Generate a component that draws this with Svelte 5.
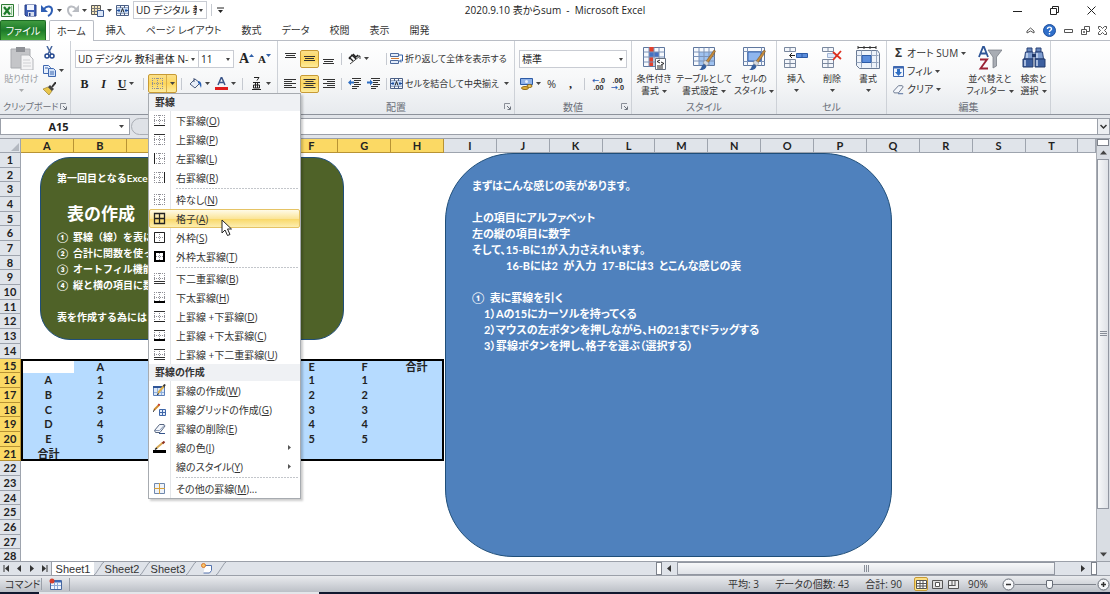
<script>
    const tabs = ["ホーム", "挿入", "ページ レイアウト", "数式", "データ", "校閲", "表示", "開発"];

    const borderItems = [
        { label: "下罫線", key: "O", icon: "b" },
        { label: "上罫線", key: "P", icon: "t" },
        { label: "左罫線", key: "L", icon: "l" },
        { label: "右罫線", key: "R", icon: "r" },
        { sep: true },
        { label: "枠なし", key: "N", icon: "none" },
        { label: "格子", key: "A", icon: "all" },
        { label: "外枠", key: "S", icon: "box" },
        { label: "外枠太罫線", key: "T", icon: "thickbox" },
        { sep: true },
        { label: "下二重罫線", key: "B", icon: "bb" },
        { label: "下太罫線", key: "H", icon: "B" },
        { label: "上罫線 +下罫線", key: "D", icon: "tb" },
        { label: "上罫線 +下太罫線", key: "C", icon: "tB" },
        { label: "上罫線 +下二重罫線", key: "U", icon: "tbb" },
        { heading: "罫線の作成" },
        { label: "罫線の作成", key: "W", icon: "draw" },
        { label: "罫線グリッドの作成", key: "G", icon: "drawgrid" },
        { label: "罫線の削除", key: "E", icon: "erase" },
        { label: "線の色", key: "I", icon: "color", more: true },
        { label: "線のスタイル", key: "Y", more: true },
        { sep: true },
        { label: "その他の罫線", key: "M", icon: "other", tail: "..." },
    ];

    const cols = "ABCDEFGHIJKLMNOPQRST".split("");
    const rows = Array.from({ length: 28 }, (_, i) => i + 1);

    const cells = { B15: "A", F15: "E", G15: "F", H15: "合計" };
    ["A", "B", "C", "D", "E", "合計"].forEach((t, i) => (cells["A" + (16 + i)] = t));
    for (const c of ["B", "F", "G"]) {
        for (let n = 1; n <= 5; n++) cells[c + (15 + n)] = n;
    }

    const inCols = (c) => c < 8;
    const inRows = (r) => r >= 15 && r <= 21;

    let active = $state("格子");
    let name = $state("A15");
    let formula = $state("");
    let zoom = $state(90);
</script>

{#snippet borderIcon(kind)}
    <svg class="i13" viewBox="0 0 13 13">
        {#if kind === "draw"}
            <path d="M.5 2.500h11v9h-11z" fill="#dbe7f8" stroke="#5b7fb8" />
            <path d="M0 3h12" stroke="#2f5597" stroke-width="2" />
            <path d="M1 8.500h10M4.500 4v7M8.500 4v7" stroke="#8fb0de" />
            <path d="M5 9l6-7" stroke="#e0b04a" stroke-width="2" />
            <path d="M10.500 2.500l1.500-2" stroke="#333" stroke-width="2" />
            <path d="M4 10.500l2-.8" stroke="#222" />
        {:else if kind === "drawgrid"}
            <path d="M1 7l5-5" stroke="#d08a2c" stroke-width="2" />
            <path d="M5.500 2.500l1-1.500" stroke="#c0392b" stroke-width="2" />
            <path d="M0 9l1.500-2.500" stroke="#333" />
            <path d="M6.500 6.500h6v6h-6zM9.500 6.500v6M6.500 9.500h6" fill="#e3edfb" stroke="#3f66a8" />
        {:else if kind === "erase"}
            <path d="M1.500 8.500l5-6h4.500l1 1.500-5 6.500h-4.500z" fill="#f4f7fc" stroke="#56657f" />
            <path d="M2 8.500h4.500l5-5.500" fill="none" stroke="#8b9bb8" />
            <path d="M6 11.500h6" stroke="#34548c" />
        {:else if kind === "color"}
            <path d="M3 7.500l7-6" stroke="#d8aa55" stroke-width="2" />
            <path d="M9.500 2.500l2-2" stroke="#8d2f22" stroke-width="2" />
            <path d="M2 8.500l2-1.500" stroke="#222" stroke-width="1.500" />
            <path d="M0 9h13v3h-13z" fill="#000" />
        {:else if kind === "other"}
            <path d="M1.500 1.500h10v10h-10z" fill="#eef3fa" stroke="#6f88ad" />
            <path d="M6.500 1v11M1 6.500h11" stroke="#d8a13a" />
        {:else}
            <path
                d="M1.500 1v11M6.500 1v11M11.500 1v11M1 1.500h11M1 6.500h11M1 11.500h11"
                stroke="#8f8f96"
                stroke-dasharray="1 1"
            />
            {#if kind.startsWith("t") && kind !== "thickbox"}<path d="M1 1.500h11" stroke="#333" />{/if}
            {#if kind === "b" || kind === "tb"}<path d="M1 11.500h11" stroke="#222" />{/if}
            {#if kind.endsWith("bb")}<path d="M1 9.500h11M1 11.500h11" stroke="#333" />{/if}
            {#if kind.endsWith("B")}<path d="M1 11h11" stroke="#000" stroke-width="2" />{/if}
            {#if kind === "l"}<path d="M1.500 1v11" stroke="#222" />{/if}
            {#if kind === "r"}<path d="M11.500 1v11" stroke="#222" />{/if}
            {#if kind === "all"}
                <path d="M1.500 1.500h10v10h-10zM6.500 1v11M1 6.500h11" fill="none" stroke="#222" stroke-width="1.300" />
            {/if}
            {#if kind === "box"}<path d="M1.500 1.500h10v10h-10z" fill="none" stroke="#222" />{/if}
            {#if kind === "thickbox"}<path d="M2 2h9v9h-9z" fill="none" stroke="#000" stroke-width="2" />{/if}
        {/if}
    </svg>
{/snippet}

{#snippet arrow()}
    <svg class="arrow" viewBox="0 0 5 3"><path d="M0 0h5l-2.500 3z" fill="#444" /></svg>
{/snippet}

{#snippet launcher()}
    <svg class="launcher" viewBox="0 0 7 7">
        <path d="M.5 6v-5.500h5.500" fill="none" stroke="#8a8f98" />
        <path d="M3 3l3 3M6.500 3.500v3h-3" fill="none" stroke="#6e747e" />
    </svg>
{/snippet}

<!-- five text rules: l(eft), c(enter), r(ight) -->
{#snippet lines(side, count = 5)}
    <svg class="i13" viewBox="0 0 13 13">
        {#each Array(count) as _, i}
            {@const w = i % 2 ? 8 : 12}
            <path
                d="M{side === 'l' ? 0 : side === 'r' ? 13 - w : (13 - w) / 2} {i * 2 + 2.5}h{w}"
                stroke="#333"
            />
        {/each}
    </svg>
{/snippet}

{#snippet valign(y)}
    <svg class="i13" viewBox="0 0 13 13">
        <path d="M1 {y}.500h11M2 {y + 2}.500h9M1 {y + 4}.500h11" stroke="#333" />
    </svg>
{/snippet}

{#snippet indent(out)}
    <svg class="i13" viewBox="0 0 13 13">
        <path d="M4 1.500h9M6 3.500h7M6 5.500h5M6 7.500h7M4 9.500h7M4 11.500h5" stroke="#333" />
        {#if out}
            <path d="M0 5.500l3-3v2h3v2h-3v2z" fill="#2f6fc4" />
        {:else}
            <path d="M6 5.500l-3-3v2h-3v2h3v2z" fill="#2f6fc4" />
        {/if}
    </svg>
{/snippet}

{#snippet mergeIcon()}
    <svg class="i13" viewBox="0 0 13 13">
        <path d="M.5 1.500h12v10h-12z" fill="#f6f9fd" stroke="#4a5f86" />
        <path d="M.5 4h12M.5 9h12M4.500 1.500v2.500M8.500 1.500v2.500M4.500 9v2.500M8.500 9v2.500" stroke="#4a5f86" />
        <path d="M1 4h11v5h-11z" fill="#c7dbf6" />
        <path d="M1 6.500h3M12 6.500h-3M3 5v3M10 5v3" stroke="#1f4e9c" />
        <path d="M5 8.500l1.500-4 1.500 4" fill="none" stroke="#222" />
    </svg>
{/snippet}

{#snippet brush()}
    <path d="M12 18l8-11 2-3 1.500 1-2 4-7 10z" fill="#c58b3c" stroke="#6e4a1b" stroke-width=".5" />
    <path d="M13 14l4 3-2 3-4-3z" fill="#d5d9df" stroke="#7c838e" stroke-width=".5" />
    <path d="M7 24c3-1 2-5 5-6l2.500 2.500c-1 3-4 4-7.500 3.500z" fill="#365f9f" />
{/snippet}

{#snippet slash()}
    <svg class="slash" viewBox="0 0 10 13"><path d="M0 12.500h1l8-12h1" fill="none" stroke="#9aa0aa" /></svg>
{/snippet}

<div class="excel">
    <header class="titlebar">
        <div class="quick">
            <svg class="i13" viewBox="0 0 13 13">
                <path d="M.5.5h12v12h-12z" fill="#e9f5e6" stroke="#2d7b34" />
                <path d="M3 3l6 7.500M9 3l-6 7.500" stroke="#1e7c2b" stroke-width="2.200" />
                <path d="M10.500 2v9" stroke="#8cc492" />
            </svg>
            <span class="vsep"></span>
            <button aria-label="上書き保存">
                <svg class="i13" viewBox="0 0 13 13">
                    <path d="M1 1h11v11h-10l-1-1z" fill="#3f5fb5" stroke="#263e86" />
                    <path d="M3 1h7v5h-7z" fill="#f2f6ff" />
                    <path d="M4 8h6v4h-6z" fill="#d5dcec" />
                    <path d="M5 9h1.500v3h-1.500z" fill="#263e86" />
                </svg>
            </button>
            <button aria-label="元に戻す">
                <svg class="i13" viewBox="0 0 13 13">
                    <path d="M3 5c3-4 8-3 8 1 0 3-2 5-4 6" fill="none" stroke="#2f5fb5" stroke-width="2" />
                    <path d="M0 1v7h7z" fill="#2f5fb5" />
                </svg>
                {@render arrow()}
            </button>
            <button aria-label="やり直し">
                <svg class="i13" viewBox="0 0 13 13">
                    <path d="M10 5c-3-4-8-3-8 1 0 3 2 5 4 6" fill="none" stroke="#b9bcc2" stroke-width="2" />
                    <path d="M13 1v7h-7z" fill="#b9bcc2" />
                </svg>
                {@render arrow()}
            </button>
            <button aria-label="貼り付け">
                <svg class="i13" viewBox="0 0 13 13">
                    <path d="M.5 1.500h9v9h-9z" fill="#f6e7bd" stroke="#555" />
                    <path d="M.5 4.500h9M.5 7.500h9M3.500 1.500v9M6.500 1.500v9" stroke="#777" />
                    <path d="M6.500 6.500h6v6h-6z" fill="#dbe7f8" stroke="#3c5a91" />
                </svg>
                {@render arrow()}
            </button>
            <button aria-label="セルを結合">{@render mergeIcon()}</button>
            <span class="pick quick-font">
                <select aria-label="フォント名"><option>UD デジタル 教</option></select>
            </span>
            <span class="vsep"></span>
            <button aria-label="クイック アクセス ツール バーのカスタマイズ">
                <svg class="i7" viewBox="0 0 7 7"><path d="M0 1h7" stroke="#222" /><path d="M1 3h5l-2.500 3z" fill="#222" /></svg>
            </button>
        </div>
        <h1>2020.9.10 表からsum&nbsp; -&nbsp; Microsoft Excel</h1>
        <div class="window-buttons">
            <button aria-label="最小化">
                <svg class="i9" viewBox="0 0 9 9"><path d="M0 5.500h9" stroke="#222" /></svg>
            </button>
            <button aria-label="元に戻す (縮小)">
                <svg class="i9" viewBox="0 0 9 9">
                    <path d="M.5 2.500h6v6h-6zM2.500 2.500v-2h6v6h-2" fill="none" stroke="#222" />
                </svg>
            </button>
            <button aria-label="閉じる">
                <svg class="i9" viewBox="0 0 9 9"><path d="M.5.5l8 8M8.500.5l-8 8" stroke="#222" /></svg>
            </button>
        </div>
    </header>

    <nav class="tabs">
        <button class="file">ファイル</button>
        {#each tabs as tab, i}
            <button class="tab" class:current={i === 0}>{tab}</button>
        {/each}
        <div class="tab-tools">
            <button aria-label="リボンの最小化">
                <svg class="i9" viewBox="0 0 9 9"><path d="M1 5l3.500-3 3.500 3v2l-3.500-2-3.500 2z" fill="none" stroke="#555" /></svg>
            </button>
            <button aria-label="ヘルプ">
                <svg class="i13" viewBox="0 0 13 13">
                    <circle cx="6.500" cy="6.500" r="6" fill="#2f6fca" stroke="#1f4f9c" />
                    <path d="M4.500 5c0-2.500 4-2.500 4 0 0 1.300-2 1.300-2 3M6.500 9v1.500" fill="none" stroke="#fff" stroke-width="1.400" />
                </svg>
            </button>
            <button aria-label="ウィンドウの最小化">
                <svg class="i9" viewBox="0 0 9 9"><path d="M.5 3.500h8v3h-8z" fill="none" stroke="#555" /></svg>
            </button>
            <button aria-label="ウィンドウを元のサイズに戻す">
                <svg class="i9" viewBox="0 0 9 9"><path d="M.5 3.500h5v5h-5zM3.500 3.500v-3h5v5h-3M2.500 5.500h1v1h-1z" fill="none" stroke="#555" /></svg>
            </button>
            <button aria-label="ウィンドウを閉じる">
                <svg class="i9" viewBox="0 0 9 9">
                    <path d="M.5.5h2l2 2 2-2h2v2l-2 2 2 2v2h-2l-2-2-2 2h-2v-2l2-2-2-2z" fill="none" stroke="#555" />
                </svg>
            </button>
        </div>
    </nav>

    <div class="ribbon">
        <section class="group clipboard">
            <div class="body">
                <button class="big disabled">
                    <svg class="i24" viewBox="0 0 24 24">
                        <path d="M1 3h19v19h-19z" fill="#c4c5c8" stroke="#a9abaf" />
                        <path d="M6 1h9v5h-9z" fill="#8f9196" />
                        <path d="M11 9h8l4 4v11h-12z" fill="#f4f4f5" stroke="#b4b6ba" />
                        <path d="M13 14h7M13 17h8M13 20h8" stroke="#cfd0d3" />
                    </svg>
                    <span>貼り付け</span>
                    {@render arrow()}
                </button>
                <div class="stack">
                    <button aria-label="切り取り">
                        <svg class="i13" viewBox="0 0 13 13">
                            <path d="M4 0l4 8M9 0l-4 8" stroke="#47669e" stroke-width="1.500" />
                            <circle cx="4" cy="10" r="2" fill="none" stroke="#23478f" stroke-width="1.500" />
                            <circle cx="9" cy="10" r="2" fill="none" stroke="#23478f" stroke-width="1.500" />
                        </svg>
                    </button>
                    <button aria-label="コピー">
                        <svg class="i13" viewBox="0 0 13 13">
                            <path d="M.5 1.500h5l2 2v6h-7z" fill="#e6effc" stroke="#3f68b0" />
                            <path d="M5.500 4.500h5l2 2v6h-7z" fill="#cfe0f8" stroke="#3f68b0" />
                            <path d="M7 8h4M7 10h4M2 4h3" stroke="#3f68b0" />
                        </svg>
                        {@render arrow()}
                    </button>
                    <button aria-label="書式のコピー">
                        <svg class="i13" viewBox="0 0 13 13">
                            <path d="M0 7l5-2 4 4-3 4z" fill="#e9c64c" stroke="#8f7420" stroke-width=".6" />
                            <path d="M5 5l2-2 4 4-2 2z" fill="#444" />
                            <path d="M9 5l4-5" stroke="#333" stroke-width="2" />
                        </svg>
                    </button>
                </div>
            </div>
            <footer>クリップボード{@render launcher()}</footer>
        </section>

        <section class="group font">
            <div class="body rows">
                <div class="line">
                    <span class="pick face">
                        <select aria-label="フォント"><option>UD デジタル 教科書体 N-B</option></select>
                    </span>
                    <span class="pick size">
                        <select aria-label="フォント サイズ"><option>11</option></select>
                    </span>
                    <button class="letter grow" aria-label="フォント サイズの拡大">
                        A<svg class="i7" viewBox="0 0 7 7"><path d="M0 4l2.500-3 2.500 3z" fill="#2f5fa8" /></svg>
                    </button>
                    <button class="letter shrink" aria-label="フォント サイズの縮小">
                        A<svg class="i7" viewBox="0 0 7 7"><path d="M0 1l2.500 3 2.500-3z" fill="#2f5fa8" /></svg>
                    </button>
                </div>
                <div class="line">
                    <button class="letter square">B</button>
                    <button class="letter square italic">I</button>
                    <button class="letter tool"><u>U</u>{@render arrow()}</button>
                    <span class="vsep"></span>
                    <div class="borders">
                        <button class="pressed split" aria-label="罫線" aria-haspopup="menu">
                            {@render borderIcon("none")}
                            <span class="split-arrow">{@render arrow()}</span>
                        </button>
                        <div class="menu" role="menu">
                            <h2>罫線</h2>
                            {#each borderItems as item}
                                {#if item.sep}
                                    <hr />
                                {:else if item.heading}
                                    <h2>{item.heading}</h2>
                                {:else}
                                    <button
                                        role="menuitem"
                                        class="item"
                                        class:hot={item.label === active}
                                        onclick={() => (active = item.label)}
                                    >
                                        <span class="gutter">{#if item.icon}{@render borderIcon(item.icon)}{/if}</span>
                                        <span class="label">{item.label}(<u>{item.key}</u>){item.tail ?? ""}</span>
                                        {#if item.more}
                                            <svg class="i7" viewBox="0 0 7 7"><path d="M2 1l3 2.500-3 2.500z" fill="#555" /></svg>
                                        {/if}
                                    </button>
                                {/if}
                            {/each}
                            <svg class="pointer" viewBox="0 0 12 18">
                                <path d="M1 1v13l3-3 2.500 5.500 2.500-1-2.500-5.500h4z" fill="#fff" stroke="#222" />
                            </svg>
                        </div>
                    </div>
                    <span class="vsep"></span>
                    <button class="tool" aria-label="塗りつぶしの色">
                        <svg class="i13" viewBox="0 0 13 13">
                            <path d="M1 7l5-5 5 4-5 5z" fill="#e8eef8" stroke="#4a5b7c" />
                            <path d="M5 5v-4" stroke="#4a5b7c" />
                            <path d="M9 4c3 0 4 3 3 7-1-2-1-4-3-5z" fill="#2c62b4" />
                        </svg>
                        {@render arrow()}
                    </button>
                    <button class="tool" aria-label="フォントの色">
                        <svg class="i13" viewBox="0 0 13 13">
                            <path d="M3 8l3.500-8 3.500 8M4.500 5.500h4" fill="none" stroke="#3a5488" stroke-width="1.500" />
                            <path d="M0 10h13v3h-13z" fill="#e01b1b" />
                        </svg>
                        {@render arrow()}
                    </button>
                    <span class="vsep"></span>
                    <button class="tool" aria-label="ふりがなの表示">
                        <svg class="i13" viewBox="0 0 13 13">
                            <path d="M4 .5h5l-2 3M3 5.500h7M2 12.500h9M3.500 8h6v3h-6zM5.500 5v6M7.500 5v6" fill="none" stroke="#222" />
                        </svg>
                        {@render arrow()}
                    </button>
                </div>
            </div>
            <footer></footer>
        </section>

        <section class="group align">
            <div class="body rows">
                <div class="line">
                    <button class="square" aria-label="上揃え">{@render valign(1)}</button>
                    <button class="square pressed" aria-label="上下中央揃え">{@render valign(4)}</button>
                    <button class="square" aria-label="下揃え">{@render valign(7)}</button>
                    <span class="vsep"></span>
                    <button class="pair" aria-label="方向">
                        <svg class="i13" viewBox="0 0 13 13">
                            <path d="M2 12l10-8M9 4h3v3" fill="none" stroke="#444" />
                            <path d="M1 5l4 4M1 7l3-4 4 4M5 2l3 3 2-2" fill="none" stroke="#222" stroke-width="1.300" />
                        </svg>
                        {@render arrow()}
                    </button>
                    <span class="vsep"></span>
                    <button class="texty">
                        <svg class="i13" viewBox="0 0 13 13">
                            <path d="M.5 1.500h8v3h-8zM.5 8.500h8v3h-8z" fill="#e2ecfa" stroke="#4e6a9c" />
                            <path d="M1 6.500h8" stroke="#d27a33" />
                            <path d="M9 3h3.500v6h-2.500M11 7.500l-1.500 1.500 1.500 1.500" fill="none" stroke="#2f5fa8" />
                        </svg>
                        折り返して全体を表示する
                    </button>
                </div>
                <div class="line">
                    <button class="square" aria-label="左揃え">{@render lines("l")}</button>
                    <button class="square pressed" aria-label="中央揃え">{@render lines("c")}</button>
                    <button class="square" aria-label="右揃え">{@render lines("r")}</button>
                    <span class="vsep"></span>
                    <button class="square" aria-label="インデントを減らす">{@render indent(true)}</button>
                    <button class="square" aria-label="インデントを増やす">{@render indent(false)}</button>
                    <span class="vsep"></span>
                    <button class="texty">{@render mergeIcon()}セルを結合して中央揃え {@render arrow()}</button>
                </div>
            </div>
            <footer>配置{@render launcher()}</footer>
        </section>

        <section class="group number">
            <div class="body rows">
                <div class="line">
                    <span class="pick format">
                        <select aria-label="表示形式"><option>標準</option></select>
                    </span>
                </div>
                <div class="line">
                    <button class="pair" aria-label="通貨表示形式">
                        <svg class="i13" viewBox="0 0 13 13">
                            <path d="M.5 1.500h12v6h-12z" fill="#8fb2e8" stroke="#2d5ba6" />
                            <circle cx="6.500" cy="4.500" r="1.500" fill="#e8f0fc" />
                            <ellipse cx="5" cy="11" rx="3.500" ry="1.500" fill="#e4b23c" stroke="#936a12" />
                            <ellipse cx="9.500" cy="9" rx="2.500" ry="1.500" fill="#f0cb62" stroke="#936a12" />
                        </svg>
                        {@render arrow()}
                    </button>
                    <button class="square percent-sign">%</button>
                    <button class="square letter">,</button>
                    <span class="vsep"></span>
                    <button class="square digits" aria-label="小数点以下の表示桁数を増やす">
                        <span><i>←</i>.0</span><span>.00</span>
                    </button>
                    <button class="square digits" aria-label="小数点以下の表示桁数を減らす">
                        <span>.00</span><span><i>→</i>.0</span>
                    </button>
                </div>
            </div>
            <footer>数値{@render launcher()}</footer>
        </section>

        <section class="group styles">
            <div class="body">
                <button class="big">
                    <svg class="i24" viewBox="0 0 24 24">
                        <path d="M1.500 1.500h21v19h-21z" fill="#f6f9fd" stroke="#5f779e" />
                        <path d="M7 1h5v5h-5zM7 11h4v9h-4z" fill="#e2402c" />
                        <path d="M7 6h10v5h-10z" fill="#4472c4" />
                        <path d="M1.500 6h21M1.500 11h21M1.500 16h21M7 1.500v19M12 1.500v19M17 1.500v19" stroke="#7c93b8" />
                        <path d="M13.500 12.500h10v11h-10z" fill="#fff" stroke="#66707f" />
                        <path d="M18 14l-3 1.500 3 1.500M19 16l3 1.500-3 1.500M15 20h6M15 22h6" fill="none" stroke="#222" />
                    </svg>
                    <span>条件付き</span><span>書式 {@render arrow()}</span>
                </button>
                <button class="big">
                    <svg class="i24" viewBox="0 0 24 24">
                        <path d="M1.500 1.500h21v18h-21z" fill="#f6f9fd" stroke="#5f779e" />
                        <path d="M7 6h15v13h-15z" fill="#9fc2f0" />
                        <path d="M1.500 6h21M1.500 10.500h21M1.500 15h21M7 1.500v18M12 1.500v18M17 1.500v18" stroke="#7c93b8" />
                        {@render brush()}
                    </svg>
                    <span>テーブルとして</span><span>書式設定 {@render arrow()}</span>
                </button>
                <button class="big">
                    <svg class="i24" viewBox="0 0 24 24">
                        <path d="M1.500 1.500h21v18h-21z" fill="#f6f9fd" stroke="#5f779e" />
                        <path d="M1.500 5.500h21M1.500 15.500h21M5.500 1.500v18M19.500 1.500v18" stroke="#7c93b8" />
                        <path d="M6 6h13v9h-13z" fill="#8fb6ee" stroke="#3d68b3" />
                        {@render brush()}
                    </svg>
                    <span>セルの</span><span>スタイル {@render arrow()}</span>
                </button>
            </div>
            <footer>スタイル</footer>
        </section>

        <section class="group cellgroup">
            <div class="body">
                <button class="big">
                    <svg class="i24" viewBox="0 0 24 24">
                        <path d="M.5 1.500h11v4h-11zM6 1.500v4M.5 13.500h11v8h-11zM6 13.500v8M.5 17.500h11" fill="#f3f6fb" stroke="#7a889e" />
                        <path d="M12.500 7.500h11v4h-11zM18 7.500v4" fill="#5b8ddb" stroke="#2d5ba6" />
                        <path d="M11 9.500h-5M8 7l-2.500 2.500 2.500 2.500" fill="none" stroke="#222" />
                    </svg>
                    <span>挿入</span>{@render arrow()}
                </button>
                <button class="big">
                    <svg class="i24" viewBox="0 0 24 24">
                        <path d="M2.500 1.500h11v4h-11zM8 1.500v4M2.500 13.500h11v8h-11zM8 13.500v8M2.500 17.500h11" fill="#f3f6fb" stroke="#7a889e" />
                        <path d="M7.500 7.500h8v4h-8z" fill="#dce8fa" stroke="#a0b4d4" />
                        <path d="M13 6l8 7M21 5l-8 9" stroke="#dd2f1f" stroke-width="1.800" />
                    </svg>
                    <span>削除</span>{@render arrow()}
                </button>
                <button class="big">
                    <svg class="i24" viewBox="0 0 24 24">
                        <path d="M2 1.500h18M2 0v3M20 0v3M8 0v3M14 0v3" stroke="#333" />
                        <path d="M.5 4.500h21l2 3v15h-20l-3-3z" fill="#eef3fa" stroke="#6a7a94" />
                        <path d="M5.500 4.500v17M15.500 4.500v17M20.500 4.500v17M.5 9.500h22M.5 16.500h22" stroke="#97a6bf" />
                        <path d="M6 9.500h9v7h-9z" fill="#5b8ddb" stroke="#2d5ba6" />
                    </svg>
                    <span>書式</span>{@render arrow()}
                </button>
            </div>
            <footer>セル</footer>
        </section>

        <section class="group editing">
            <div class="body">
                <div class="stack edit-list">
                    <button><b class="sigma">Σ</b>オート SUM {@render arrow()}</button>
                    <button>
                        <svg class="i11" viewBox="0 0 11 11">
                            <path d="M.5.5h10v10h-10z" fill="#f1f6fd" stroke="#3f68b0" />
                            <path d="M.5 1.500h10" stroke="#3f68b0" stroke-width="2" />
                            <path d="M4 3h3v3h2l-3.500 4-3.500-4h2z" fill="#2f6fc4" />
                        </svg>
                        フィル {@render arrow()}
                    </button>
                    <button>
                        <svg class="i11" viewBox="0 0 13 13">
                            <path d="M.5 8.500l6-6.500h4.500l1 1.500-5.500 7h-5z" fill="#f4f7fc" stroke="#56657f" />
                            <path d="M6 11.500h6" stroke="#34548c" />
                        </svg>
                        クリア {@render arrow()}
                    </button>
                </div>
                <button class="big sort">
                    <svg class="i24" viewBox="0 0 24 24">
                        <path d="M10 4h14l-5.500 7v9l-3.500 2v-11z" fill="#a9adb4" stroke="#70757e" stroke-width=".7" />
                        <path d="M1 11l4-10h1l4 10M3 7.500h5" fill="none" stroke="#2e5596" stroke-width="1.800" />
                        <path d="M2 13.500h7l-6.500 9h7.500" fill="none" stroke="#9b2335" stroke-width="1.900" />
                    </svg>
                    <span>並べ替えと</span><span>フィルター {@render arrow()}</span>
                </button>
                <button class="big find">
                    <svg class="i24" viewBox="0 0 24 24">
                        <path d="M5 2h5v4h-5zM14 2h5v4h-5z" fill="#6687bd" stroke="#2a4377" />
                        <path d="M3.500 6h7.500v7h-8.500zM13 6h7.500l1 7h-8.500z" fill="#7d9ccf" stroke="#2a4377" />
                        <path d="M1 13h10v8h-10zM13 13h10v8h-10z" fill="#3c5f9f" stroke="#223a6b" />
                        <path d="M3 14v6M15 14v6M5 7v5M15 7v5" stroke="#c9d9f2" stroke-width="1.500" />
                        <path d="M10 8h4v3h-4z" fill="#223a6b" />
                    </svg>
                    <span>検索と</span><span>選択 {@render arrow()}</span>
                </button>
            </div>
            <footer>編集</footer>
        </section>
    </div>

    <div class="formula">
        <span class="namebox">
            <input aria-label="名前ボックス" bind:value={name} />
            {@render arrow()}
        </span>
        <span class="knob"></span>
        <input class="fx" aria-label="数式バー" bind:value={formula} />
        <button class="expand" aria-label="数式バーの展開">
            <svg class="i7" viewBox="0 0 7 7"><path d="M.5 2l3 3 3-3" fill="none" stroke="#333" stroke-width="1.500" /></svg>
        </button>
    </div>

    <div class="work">
        <div class="sheet">
            <table>
                <thead>
                    <tr>
                        <th class="corner"><svg class="i9" viewBox="0 0 9 9"><path d="M9 1v8h-8z" fill="#b3b8c0" /></svg></th>
                        {#each cols as col, c}
                            <th class="colhead" class:picked={inCols(c)}>{col}</th>
                        {/each}
                        <th class="colhead"></th>
                    </tr>
                </thead>
                <tbody>
                    {#each rows as r}
                        <tr>
                            <th class="rowhead" class:picked={inRows(r)}>{r}</th>
                            {#each cols as col, c}
                                <td
                                    class:sel={inRows(r) && inCols(c)}
                                    class:origin={r === 15 && c === 0}
                                    class:top={r === 15 && inCols(c)}
                                    class:bottom={r === 21 && inCols(c)}
                                    class:left={inRows(r) && c === 0}
                                    class:right={inRows(r) && c === 7}
                                >{cells[col + r] ?? ""}</td>
                            {/each}
                            <td></td>
                        </tr>
                    {/each}
                </tbody>
            </table>

            <div class="shape green">
                <p>第一回目となるExce</p>
                <p class="big-title">表の作成</p>
                <p>①&nbsp; 罫線（線）を表に</p>
                <p>②&nbsp; 合計に関数を使っ</p>
                <p>③&nbsp; オートフィル機能</p>
                <p>④&nbsp; 縦と横の項目に数</p>
                <p class="gap">表を作成する為には</p>
            </div>

            <div class="shape blue">
                <p>まずはこんな感じの表があります。</p>
                <p class="gap">上の項目にアルファベット</p>
                <p>左の縦の項目に数字</p>
                <p>そして、15-Bに1が入力さえれいます。</p>
                <p class="deep">16-Bには2&nbsp; が入力&nbsp; 17-Bには3&nbsp; とこんな感じの表</p>
                <p class="gap">①&nbsp; 表に罫線を引く</p>
                <p class="step">1）Aの15にカーソルを持ってくる</p>
                <p class="step">2）マウスの左ボタンを押しながら、Hの21までドラッグする</p>
                <p class="step">3）罫線ボタンを押し、格子を選ぶ（選択する）</p>
            </div>
        </div>

        <div class="vscroll">
            <span class="splitter"></span>
            <button aria-label="上へスクロール">
                <svg class="i7" viewBox="0 0 7 7"><path d="M0 5.500l3.500-4 3.500 4z" fill="#444" /></svg>
            </button>
            <span class="thumb"><svg class="i7" viewBox="0 0 7 7"><path d="M0 .5h7M0 2.500h7M0 4.500h7" stroke="#888e98" /></svg></span>
            <span class="rest"></span>
            <button aria-label="下へスクロール">
                <svg class="i7" viewBox="0 0 7 7"><path d="M0 1.500l3.500 4 3.500-4z" fill="#444" /></svg>
            </button>
        </div>
    </div>

    <div class="sheetbar">
        <div class="nav">
            <button aria-label="最初のシート"><svg class="i7" viewBox="0 0 7 7"><path d="M1 0v7" stroke="#333" /><path d="M6 0v7l-4-3.500z" fill="#333" /></svg></button>
            <button aria-label="前のシート"><svg class="i7" viewBox="0 0 7 7"><path d="M5 0v7l-4-3.500z" fill="#333" /></svg></button>
            <button aria-label="次のシート"><svg class="i7" viewBox="0 0 7 7"><path d="M2 0v7l4-3.500z" fill="#333" /></svg></button>
            <button aria-label="最後のシート"><svg class="i7" viewBox="0 0 7 7"><path d="M6 0v7" stroke="#333" /><path d="M1 0v7l4-3.500z" fill="#333" /></svg></button>
        </div>
        <button class="sheet-tab open">Sheet1</button>
        {@render slash()}
        <button class="sheet-tab">Sheet2</button>
        {@render slash()}
        <button class="sheet-tab">Sheet3</button>
        {@render slash()}
        <button class="sheet-tab new" aria-label="ワークシートの挿入">
            <svg class="i13" viewBox="0 0 13 13">
                <path d="M5 3.500h6.500v5l-2 2.500h-6" fill="#fff" stroke="#5473ad" />
                <circle cx="3.500" cy="3.500" r="2" fill="#f7c46a" stroke="#d9772b" />
            </svg>
        </button>
        {@render slash()}
        <div class="hscroll">
            <span class="splitter"></span>
            <button aria-label="左へスクロール">
                <svg class="i7" viewBox="0 0 7 7"><path d="M5 0v7l-4-3.500z" fill="#333" /></svg>
            </button>
            <span class="thumb"><svg class="i7" viewBox="0 0 7 7"><path d="M1.500 0v7M3.500 0v7M5.500 0v7" stroke="#888e98" /></svg></span>
            <button class="far" aria-label="右へスクロール">
                <svg class="i7" viewBox="0 0 7 7"><path d="M2 0v7l4-3.500z" fill="#333" /></svg>
            </button>
            <span class="splitter"></span>
        </div>
    </div>

    <div class="status">
        <span class="mode">コマンド</span>
        <button class="macro" aria-label="マクロの記録">
            <svg class="i13" viewBox="0 0 13 13">
                <path d="M1.500 2.500h11v9h-11z" fill="#eef4fd" stroke="#47679f" />
                <path d="M2 3.500h10" stroke="#3c68b8" stroke-width="2" />
                <path d="M2 7.500h10M5.500 5v6M8.500 5v6" stroke="#8eaad8" />
                <circle cx="3" cy="3" r="2.500" fill="#d6402f" />
            </svg>
        </button>
        <div class="stats">
            <span>平均: 3</span>
            <span>データの個数: 43</span>
            <span>合計: 90</span>
        </div>
        <div class="views">
            <button class="pressed" aria-label="標準">
                <svg class="i11" viewBox="0 0 11 11"><path d="M.5 1.500h10v8h-10zM.5 4.500h10M.5 7h10M4 1.500v8M7 1.500v8" fill="#fff" stroke="#555" /></svg>
            </button>
            <button aria-label="ページ レイアウト">
                <svg class="i11" viewBox="0 0 11 11"><path d="M.5 1.500h10v8h-10z" fill="#ddd" stroke="#555" /><path d="M3.500 3.500h4v4h-4z" fill="#fff" stroke="#555" /></svg>
            </button>
            <button aria-label="改ページ プレビュー">
                <svg class="i11" viewBox="0 0 11 11"><path d="M.5 1.500h10v8h-10zM4 1.500v5M7 1.500v5M.5 6.500h7" fill="#eee" stroke="#555" /></svg>
            </button>
        </div>
        <span class="percent">{zoom}%</span>
        <button aria-label="縮小"><svg class="i13" viewBox="0 0 13 13"><circle cx="6.500" cy="6.500" r="5.500" fill="#f7f8fa" stroke="#666c76" /><path d="M4 6.500h5" stroke="#333" stroke-width="1.500" /></svg></button>
        <input type="range" min="10" max="200" aria-label="ズーム" bind:value={zoom} />
        <button aria-label="拡大"><svg class="i13" viewBox="0 0 13 13"><circle cx="6.500" cy="6.500" r="5.500" fill="#f7f8fa" stroke="#666c76" /><path d="M4 6.500h5M6.500 4v5" stroke="#333" stroke-width="1.500" /></svg></button>
    </div>
    <div class="taskbar"><span></span></div>
</div>

<style>
    :global(body) {
        margin: 0;
    }
    .excel {
        display: flex;
        flex-direction: column;
        height: 100vh;
        overflow: hidden;
        background: #fff;
        color: #333;
        font-family: "Open Sans", "Noto Sans CJK JP", sans-serif;
        font-size: 10px;
        font-feature-settings: "palt";
        line-height: 12px;
        white-space: nowrap;
    }
    button,
    input,
    select {
        margin: 0;
        padding: 0;
        border: 0;
        background: none;
        color: inherit;
        font: inherit;
        font-feature-settings: inherit;
        white-space: nowrap;
    }
    button {
        display: flex;
        align-items: center;
        justify-content: center;
    }
    svg {
        flex: none;
        display: block;
    }
    .i7 { width: 7px; height: 7px; }
    .i9 { width: 9px; height: 9px; }
    .i11 { width: 11px; height: 11px; }
    .i13 { width: 13px; height: 13px; }
    .i24 { width: 24px; height: 24px; }
    .arrow {
        width: 5px;
        height: 3px;
        margin-left: 3px;
    }
    .vsep {
        flex: none;
        width: 1px;
        height: 12px;
        margin: 0 4px;
        background: #c5c9d0;
    }

    /* title bar */
    .titlebar {
        display: grid;
        grid-template-columns: 1fr auto 1fr;
        align-items: center;
        height: 20px;
    }
    .quick {
        display: flex;
        align-items: center;
        padding-left: 1px;
    }
    .quick button {
        margin-right: 4px;
    }
    .quick .vsep {
        margin-right: 5px;
    }
    h1 {
        margin: 0;
        color: #222;
        font-size: 10px;
        font-weight: 400;
    }
    .window-buttons {
        display: flex;
        justify-content: flex-end;
        gap: 28px;
        padding-right: 14px;
    }
    .pick {
        display: flex;
        position: relative;
        box-sizing: border-box;
        height: 18px;
        border: 1px solid #c9ccd3;
        background: #fff;
    }
    .pick select {
        flex: 1;
        min-width: 0;
        padding: 0 9px 0 2px;
        overflow: hidden;
        appearance: none;
        color: #222;
        font-size: 10px;
    }
    .pick::after {
        content: "";
        position: absolute;
        right: 3px;
        top: 7px;
        border: 2px solid transparent;
        border-top: 3px solid #444;
    }
    .quick-font {
        width: 74px;
    }

    /* tabs */
    .tabs {
        display: flex;
        height: 21px;
        box-sizing: border-box;
        border-bottom: 1px solid #b9bdc5;
    }
    .file {
        width: 46px;
        margin-right: 3px;
        border: 1px solid #1c6b24;
        border-bottom: 0;
        border-radius: 2px 2px 0 0;
        background: linear-gradient(#3f9a3f, #1c7a2a 50%, #46a83c);
        color: #fff;
    }
    .tab {
        padding: 0 10px;
    }
    .current {
        padding: 0 7px;
        margin: 0 2px -1px 0;
        border: 1px solid #b9bdc5;
        border-bottom: 0;
        border-radius: 2px 2px 0 0;
        background: #fff;
    }
    .tab-tools {
        display: flex;
        align-items: center;
        gap: 8px;
        margin-left: auto;
        padding-right: 3px;
    }

    /* ribbon */
    .ribbon {
        display: flex;
        box-sizing: border-box;
        height: 74px;
        border-bottom: 1px solid #8d929b;
        background: linear-gradient(#fff, #f7f8f9 50%, #e7eaee);
    }
    .group {
        display: flex;
        flex: none;
        flex-direction: column;
        box-sizing: border-box;
        border-right: 1px solid #cdd1d7;
    }
    .body {
        display: flex;
        flex: 1;
        padding-top: 5px;
    }
    .rows {
        flex-direction: column;
        gap: 6px;
        padding: 8px 4px 0;
    }
    .line {
        display: flex;
        align-items: center;
        height: 19px;
    }
    footer {
        display: flex;
        align-items: center;
        justify-content: center;
        height: 15px;
        position: relative;
        color: #6a6f78;
    }
    .launcher {
        position: absolute;
        right: 3px;
        bottom: 4px;
        width: 7px;
        height: 7px;
    }
    .clipboard { width: 71px; }
    .font { width: 207px; }
    .align { width: 237px; }
    .number { width: 117px; }
    .styles { width: 145px; }
    .cellgroup { width: 110px; }
    .editing { width: 164px; }
    .clipboard footer {
        justify-content: flex-start;
        padding-left: 3px;
        font-size: 9px;
    }
    .big {
        flex: 1;
        flex-direction: column;
        justify-content: flex-start;
        color: #333;
        font-size: 9px;
    }
    .big .i24 {
        margin-bottom: 3px;
    }
    .big span {
        display: flex;
        align-items: center;
        height: 12px;
    }
    .big > .arrow {
        margin: 4px 0 0;
    }
    .disabled {
        flex: none;
        width: 43px;
        color: #9a9da3;
    }
    .disabled .arrow {
        opacity: 0.4;
    }
    .stack {
        display: flex;
        flex-direction: column;
        align-items: flex-start;
        gap: 5px;
    }
    .face { width: 124px; }
    .size { width: 38px; margin-left: -1px; }
    .letter {
        color: #222;
        font-family: "Liberation Serif", serif;
        font-weight: 700;
        font-size: 12px;
    }
    .letter .i7 {
        align-self: flex-start;
    }
    .grow {
        margin-left: 5px;
        font-size: 14px;
    }
    .shrink {
        margin-left: 2px;
        font-size: 11px;
    }
    .tool {
        width: 26px;
    }
    .italic {
        font-style: italic;
    }
    .pressed {
        border: 1px solid #c79a35;
        border-radius: 2px;
        background: linear-gradient(#fbe08a, #fdd75c 50%, #fdeb9c);
    }
    .borders {
        position: relative;
    }
    .split {
        box-sizing: border-box;
        width: 29px;
        height: 19px;
    }
    .split-arrow {
        display: flex;
        align-items: center;
        height: 17px;
        margin-left: 2px;
        border-left: 1px solid #d8ae4a;
    }
    .square {
        flex: none;
        box-sizing: border-box;
        width: 19px;
        height: 18px;
    }
    .pair {
        width: 30px;
    }
    .texty {
        gap: 2px;
        font-size: 9px;
    }
    .align .rows {
        padding-left: 3px;
    }
    .align .vsep {
        margin: 0 3px;
    }
    .align .pair {
        width: 38px;
        justify-content: flex-start;
        padding-left: 3px;
        box-sizing: border-box;
    }
    .format {
        flex: 1;
    }
    .percent-sign {
        font-size: 11px;
    }
    .digits {
        flex-direction: column;
        font-size: 7px;
        font-weight: 700;
        line-height: 7px;
    }
    .digits i {
        color: #2f5fb5;
        font-style: normal;
    }
    .cellgroup .body {
        padding-left: 1px;
    }
    .styles .big:nth-child(2) {
        flex: 0 0 56px;
    }
    .edit-list {
        gap: 4px;
        width: 78px;
        padding-left: 6px;
    }
    .edit-list button {
        gap: 3px;
        height: 14px;
    }
    .edit-list .arrow {
        margin-left: 0;
    }
    .sigma {
        width: 11px;
        font-size: 12px;
    }
    .find {
        flex: 0 0 40px;
    }

    /* borders menu */
    .menu {
        position: absolute;
        top: 100%;
        left: 0;
        z-index: 5;
        box-sizing: border-box;
        width: 153px;
        border: 1px solid #a7abb0;
        background: linear-gradient(90deg, #fff 21px, #e4e6e9 21px, #e4e6e9 22px, #fff 22px);
        box-shadow: 2px 2px 2px rgba(0, 0, 0, 0.2);
    }
    .menu h2 {
        margin: 0;
        padding-left: 6px;
        background: #eff1f4;
        font-size: 10px;
        font-weight: 700;
        line-height: 17px;
    }
    .menu hr {
        height: 1px;
        margin: 1px 1px 1px 27px;
        border: 0;
        background: repeating-linear-gradient(90deg, #c3c6cb 0 2px, #fff 2px 3px);
    }
    .item {
        box-sizing: border-box;
        width: 100%;
        height: 19px;
        padding-right: 6px;
        border: 1px solid transparent;
        border-radius: 2px;
    }
    .gutter {
        width: 23px;
        padding-left: 3px;
        box-sizing: border-box;
    }
    .label {
        flex: 1;
        padding-left: 3px;
        text-align: left;
    }
    .hot {
        border-color: #e5c365;
        background: linear-gradient(#fffbe8, #fbe59a 50%, #f9d765 51%, #fdeeb0);
    }
    .pointer {
        position: absolute;
        left: 72px;
        top: 125px;
        width: 12px;
        height: 18px;
    }

    /* formula bar */
    .formula {
        display: flex;
        align-items: stretch;
        height: 17px;
        padding: 3px 0;
        border-bottom: 1px solid #9ba0a9;
        background: #e1e4e9;
    }
    .namebox {
        display: flex;
        align-items: center;
        box-sizing: border-box;
        width: 130px;
        padding-right: 5px;
        border: 1px solid #9ba0a9;
        background: #fff;
    }
    .namebox input {
        flex: 1;
        min-width: 0;
        color: #222;
        font-size: 11px;
        font-weight: 700;
        text-align: center;
    }
    .knob {
        width: 28px;
        margin: 0 -10px 0 1px;
        border: 1px solid #a9adb4;
        border-radius: 9px;
        box-sizing: border-box;
        background: #dfe2e7;
    }
    .fx {
        flex: 1;
        z-index: 1;
        border: 1px solid #9ba0a9;
        border-width: 1px 0;
        background: #fff;
        min-width: 0;
    }
    .expand {
        width: 13px;
        border: 1px solid #9ba0a9;
        background: #eceef1;
        box-sizing: border-box;
    }

    /* worksheet */
    .work {
        display: flex;
        flex: 1;
        min-height: 0;
    }
    .sheet {
        position: relative;
        flex: 1;
        min-width: 0;
        overflow: hidden;
    }
    table {
        display: grid;
        grid-template-columns: 21px repeat(20, minmax(0, 3fr)) minmax(0, 1fr);
        grid-template-rows: 14px repeat(28, minmax(0, 1fr));
        height: calc(100% + 3px);
        color: #222;
        font-family: Lato, "Noto Sans CJK JP", sans-serif;
        font-size: 11px;
        font-weight: 700;
        line-height: 13px;
    }
    thead,
    tbody,
    tr {
        display: contents;
    }
    th,
    td {
        box-sizing: border-box;
        padding: 0;
        overflow: hidden;
        text-align: center;
    }
    .colhead,
    .rowhead,
    .corner {
        border: solid #9ea4ae;
        border-width: 0 1px 1px 0;
        background: #e0e4ea;
    }
    .corner svg {
        margin: 3px 0 0 10px;
    }
    .picked {
        border-color: #b89334;
        background: #fbd964;
    }
    .sel { background: #b6dbff; }
    .origin { background: #fff; }
    .top { border-top: 2px solid #000; line-height: 11px; }
    .bottom { border-bottom: 2px solid #000; }
    .left { border-left: 2px solid #000; }
    .right { border-right: 2px solid #000; }

    .shape {
        position: absolute;
        box-sizing: border-box;
        border: 1px solid #1f4e79;
        color: #fff;
        font-family: Lato, "Noto Sans CJK JP", sans-serif;
        font-size: 11px;
        font-weight: 700;
        line-height: 16px;
    }
    .shape p {
        margin: 0;
    }
    .shape .gap {
        margin-top: 16px;
    }
    .green {
        left: 40px;
        top: 18px;
        width: 304px;
        height: 183px;
        padding: 12px 16px;
        border-radius: 30px;
        background: #4f6228;
        font-size: 10px;
        font-feature-settings: normal;
    }
    .green .big-title {
        margin: 16px 10px 3px;
        font-size: 17px;
        line-height: 24px;
    }
    .blue {
        left: 445px;
        top: 14px;
        width: 447px;
        height: 404px;
        padding: 24px 26px;
        border-radius: 68px;
        background: #4f81bd;
    }
    .deep { padding-left: 34px; }
    .step { padding-left: 12px; }

    .vscroll {
        display: flex;
        flex-direction: column;
        align-items: center;
        box-sizing: border-box;
        width: 14px;
        padding-right: 1px;
        border-left: 1px solid #a9adb4;
        background: #d9dde3;
    }
    .vscroll .splitter {
        box-sizing: border-box;
        width: 12px;
        height: 7px;
        border: 1px solid #7d828b;
        background: #fff;
    }
    .vscroll button {
        width: 12px;
        height: 13px;
    }
    .thumb {
        display: flex;
        align-items: center;
        justify-content: center;
        box-sizing: border-box;
        border: 1px solid #9297a1;
        background: #eef0f3;
    }
    .vscroll .thumb {
        flex: 9;
        width: 12px;
        background: linear-gradient(90deg, #f7f8f9, #dfe2e7);
    }
    .rest {
        flex: 1;
    }

    /* sheet tabs */
    .sheetbar {
        display: flex;
        align-items: stretch;
        box-sizing: border-box;
        height: 14px;
        border-top: 1px solid #9ba0a9;
        background: #dfe3e9;
    }
    .nav {
        display: flex;
        width: 51px;
        border-right: 1px solid #9ba0a9;
    }
    .nav button {
        flex: 1;
    }
    .sheet-tab {
        width: 36px;
        font-family: "Liberation Sans", sans-serif;
        font-size: 11px;
    }
    .open {
        width: 42px;
        background: #fff;
    }
    .new {
        width: 20px;
    }
    .slash {
        width: 10px;
        height: 13px;
    }
    .hscroll {
        display: flex;
        flex: 0 0 454px;
        margin-left: auto;
    }
    .hscroll .splitter {
        box-sizing: border-box;
        width: 6px;
        border: 1px solid #7d828b;
        background: #fff;
    }
    .hscroll button {
        width: 15px;
    }
    .hscroll .thumb {
        flex: 1;
        background: linear-gradient(#f7f8f9, #dfe2e7);
    }
    .hscroll .far {
        width: 36px;
        padding-left: 18px;
    }
    .hscroll .splitter:last-child {
        margin-right: 13px;
    }

    /* status bar */
    .status {
        display: flex;
        align-items: center;
        height: 16px;
        border-top: 1px solid #9ba0a9;
        background: linear-gradient(#e9ebee, #bcc0c7);
        color: #333;
    }
    .mode {
        width: 36px;
        padding-left: 5px;
        border-right: 1px solid #9ba0a9;
    }
    .macro {
        width: 28px;
        border-right: 1px solid #9ba0a9;
    }
    .stats {
        display: flex;
        gap: 16px;
        margin-left: auto;
        padding-right: 12px;
    }
    .views {
        display: flex;
        gap: 2px;
        padding-right: 8px;
    }
    .views button {
        width: 14px;
        height: 14px;
        box-sizing: border-box;
    }
    .percent {
        width: 34px;
    }
    input[type="range"] {
        width: 81px;
        height: 13px;
        margin-right: 1px;
        appearance: none;
        background: linear-gradient(#7d828b, #7d828b) center / 100% 1px no-repeat;
    }
    input[type="range"]::-webkit-slider-thumb {
        appearance: none;
        width: 7px;
        height: 9px;
        border: 1px solid #666c76;
        border-radius: 1px 1px 3px 3px;
        background: #f7f8fa;
    }
    .taskbar {
        display: flex;
        height: 2px;
        background: #10182f;
    }
    .taskbar span {
        flex: 0 0 280px;
        margin-left: 39px;
        background: #e4e6ea;
    }
</style>
